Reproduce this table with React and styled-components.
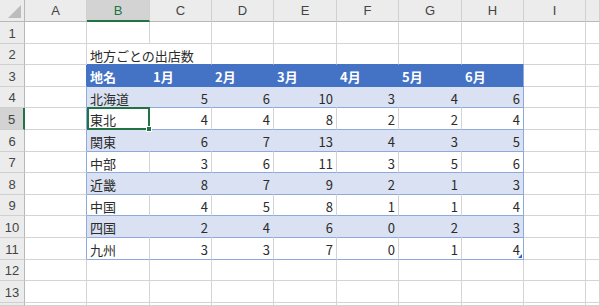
import React from "react";
import styled, { createGlobalStyle } from "styled-components";

const GRID = "#d4d4d4";
const TABLE_LINE = "#8ea9db";
const HEAD_BLUE = "#4472c4";
const BAND = "#d9e1f2";
const EXCEL_GREEN = "#217346";

const GlobalStyle = createGlobalStyle`
  html, body {
    margin: 0;
    padding: 0;
    background: #ffffff;
    overflow: hidden;
  }
  * {
    box-sizing: border-box;
  }
`;

const Sheet = styled.div`
  display: grid;
  width: 600px;
  height: 306px;
  grid-template-columns: 25px 62px 63px 62px 62px 63px 62px 63px 62px 62px 1fr;
  grid-template-rows: 22px 22px 21px 22px 21px 22px 22px 21px 22px 21px 22px 22px 21px 22px 1fr;
  overflow: hidden;
  font-family: "Noto Sans CJK JP", "Noto Sans", sans-serif;
  background: #ffffff;
`;

const Corner = styled.div`
  display: flex;
  justify-content: flex-end;
  align-items: flex-end;
  padding: 0 3px 3px 0;
  background: #ececec;
  border-right: 1px solid #b8b8b8;
  border-bottom: 1px solid #b8b8b8;
`;

const CornerMark = styled.span`
  width: 0;
  height: 0;
  border-left: 13px solid transparent;
  border-bottom: 13px solid #bcbcbc;
`;

const ColHeader = styled.div`
  display: flex;
  align-items: center;
  justify-content: center;
  background: ${(p) => (p.$selected ? "#d3d3d3" : "#ececec")};
  color: ${(p) => (p.$selected ? EXCEL_GREEN : "#444444")};
  border-right: 1px solid #d0d0d0;
  border-bottom: ${(p) =>
    p.$selected ? `2px solid ${EXCEL_GREEN}` : "1px solid #b8b8b8"};
  font-family: "Liberation Sans", "Noto Sans", sans-serif;
  font-size: 13px;
  padding-top: ${(p) => (p.$selected ? "1px" : "0")};
`;

const RowHeader = styled.div`
  display: flex;
  align-items: center;
  justify-content: center;
  background: ${(p) => (p.$selected ? "#d3d3d3" : "#ececec")};
  color: #444444;
  border-right: ${(p) =>
    p.$selected ? `2px solid ${EXCEL_GREEN}` : "1px solid #b8b8b8"};
  border-bottom: 1px solid #d0d0d0;
  font-family: "Liberation Sans", "Noto Sans", sans-serif;
  font-size: 13px;
  padding-top: 1px;
`;

const Cell = styled.div`
  position: relative;
  display: flex;
  align-items: center;
  justify-content: ${(p) => (p.$num ? "flex-end" : "flex-start")};
  grid-column: ${(p) => (p.$span ? `span ${p.$span}` : "auto")};
  padding: 2px 3px 0 3px;
  background: ${(p) => p.$bg};
  border-right: 1px solid ${(p) => p.$br};
  border-bottom: 1px solid ${(p) => p.$bb};
  color: ${(p) => (p.$head ? "#ffffff" : "#2b2b2b")};
  font-weight: ${(p) => (p.$head ? 700 : 400)};
  font-size: 13px;
  line-height: 1;
  white-space: nowrap;
`;

const Selection = styled.div`
  position: absolute;
  top: -1px;
  left: 0;
  right: -1px;
  bottom: -1px;
  border: 2px solid ${EXCEL_GREEN};
  z-index: 3;
  pointer-events: none;
`;

const FillHandle = styled.span`
  position: absolute;
  right: -4px;
  bottom: -4px;
  width: 6px;
  height: 6px;
  background: ${EXCEL_GREEN};
  border: 1px solid #ffffff;
`;

const ResizeMark = styled.span`
  position: absolute;
  right: 1px;
  bottom: 1px;
  width: 0;
  height: 0;
  border-left: 4px solid transparent;
  border-bottom: 4px solid #3a62bf;
`;

// J is only partly in view, its letter falls outside the window
const COLS = ["A", "B", "C", "D", "E", "F", "G", "H", "I", ""];
const MONTHS = ["1月", "2月", "3月", "4月", "5月", "6月"];

const STORES = [
  ["北海道", 5, 6, 10, 3, 4, 6],
  ["東北", 4, 4, 8, 2, 2, 4],
  ["関東", 6, 7, 13, 4, 3, 5],
  ["中部", 3, 6, 11, 3, 5, 6],
  ["近畿", 8, 7, 9, 2, 1, 3],
  ["中国", 4, 5, 8, 1, 1, 4],
  ["四国", 2, 4, 6, 0, 2, 3],
  ["九州", 3, 3, 7, 0, 1, 4],
];

const ROW_COUNT = 14;
const LAST_LABELLED_ROW = 13;
const SELECTED = { row: 5, col: 1 };

// table occupies B3:H11
const inTable = (r, c) => r >= 3 && r <= 11 && c >= 1 && c <= 7;
const isBand = (r) => r >= 4 && r <= 11 && r % 2 === 0;

function cellStyle(r, c) {
  let bg = "#ffffff";
  let br = GRID;
  let bb = GRID;

  if (inTable(r, c)) {
    if (r === 3) {
      bg = HEAD_BLUE;
      br = HEAD_BLUE;
      bb = HEAD_BLUE;
    } else if (isBand(r)) {
      bg = BAND;
      br = BAND;
      bb = TABLE_LINE;
    } else {
      bb = TABLE_LINE;
    }
    if (c === 7) br = TABLE_LINE;
  } else if (c === 0 && r >= 3 && r <= 11) {
    br = r === 3 ? HEAD_BLUE : TABLE_LINE;
  }
  if (r === 2 && c >= 1 && c <= 7) bb = HEAD_BLUE;
  return { bg, br, bb };
}

function cellValue(r, c) {
  if (r === 3 && c >= 1 && c <= 7) {
    return { text: c === 1 ? "地名" : MONTHS[c - 2], head: true };
  }
  if (r >= 4 && r <= 11 && c >= 1 && c <= 7) {
    const v = STORES[r - 4][c - 1];
    return { text: v, num: c > 1 };
  }
  return { text: "" };
}

const SheetRow = ({ r }) => {
  const cells = [];
  for (let c = 0; c < COLS.length; c++) {
    // title in B2 overflows into C2
    if (r === 2 && c === 2) continue;
    const s = cellStyle(r, c);
    const v = cellValue(r, c);
    const span = r === 2 && c === 1 ? 2 : undefined;
    const text = r === 2 && c === 1 ? "地方ごとの出店数" : v.text;
    const selected = r === SELECTED.row && c === SELECTED.col;
    cells.push(
      <Cell
        key={c}
        $bg={s.bg}
        $br={s.br}
        $bb={s.bb}
        $num={v.num}
        $head={v.head}
        $span={span}
      >
        {text}
        {selected && (
          <Selection>
            <FillHandle />
          </Selection>
        )}
        {r === 11 && c === 7 && <ResizeMark />}
      </Cell>
    );
  }
  return (
    <>
      <RowHeader $selected={r === SELECTED.row}>
        {r <= LAST_LABELLED_ROW ? r : ""}
      </RowHeader>
      {cells}
    </>
  );
};

const App = () => {
  const rows = Array.from({ length: ROW_COUNT }, (_, i) => i + 1);
  return (
    <>
      <GlobalStyle />
      <Sheet>
        <Corner>
          <CornerMark />
        </Corner>
        {COLS.map((k, i) => (
          <ColHeader key={i} $selected={i === SELECTED.col}>
            {k}
          </ColHeader>
        ))}
        {rows.map((r) => (
          <SheetRow key={r} r={r} />
        ))}
      </Sheet>
    </>
  );
};

export default App;
